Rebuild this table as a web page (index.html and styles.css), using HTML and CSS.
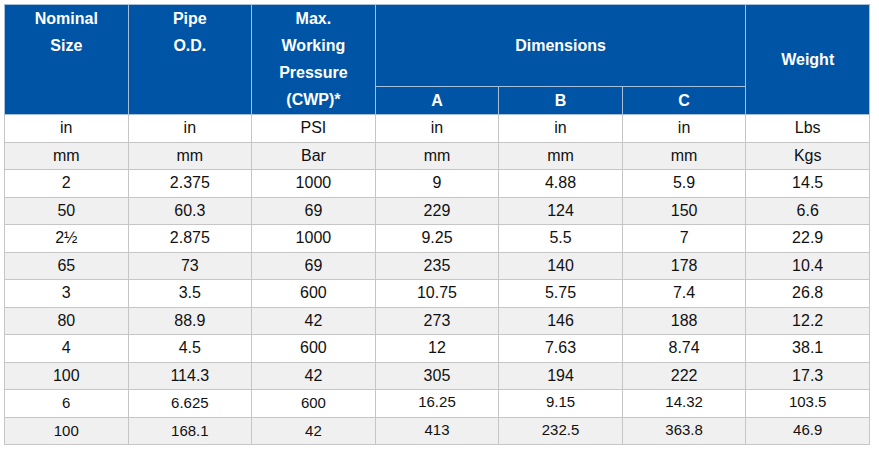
FILE: index.html
```html
<!DOCTYPE html>
<html>
<head>
<meta charset="utf-8">
<link rel="stylesheet" href="styles.css">
</head>
<body>
<table class="spec">
  <colgroup>
    <col><col><col><col><col><col><col>
  </colgroup>
  <thead>
    <tr class="h1">
      <th rowspan="2" class="top">Nominal<br>Size</th>
      <th rowspan="2" class="top">Pipe<br>O.D.</th>
      <th rowspan="2" class="top">Max.<br>Working<br>Pressure<br>(CWP)*</th>
      <th colspan="3">Dimensions</th>
      <th rowspan="2">Weight</th>
    </tr>
    <tr class="h2">
      <th>A</th><th>B</th><th>C</th>
    </tr>
  </thead>
  <tbody>
    <tr><td>in</td><td>in</td><td>PSI</td><td>in</td><td>in</td><td>in</td><td>Lbs</td></tr>
    <tr><td>mm</td><td>mm</td><td>Bar</td><td>mm</td><td>mm</td><td>mm</td><td>Kgs</td></tr>
    <tr><td>2</td><td>2.375</td><td>1000</td><td>9</td><td>4.88</td><td>5.9</td><td>14.5</td></tr>
    <tr><td>50</td><td>60.3</td><td>69</td><td>229</td><td>124</td><td>150</td><td>6.6</td></tr>
    <tr><td>2½</td><td>2.875</td><td>1000</td><td>9.25</td><td>5.5</td><td>7</td><td>22.9</td></tr>
    <tr><td>65</td><td>73</td><td>69</td><td>235</td><td>140</td><td>178</td><td>10.4</td></tr>
    <tr><td>3</td><td>3.5</td><td>600</td><td>10.75</td><td>5.75</td><td>7.4</td><td>26.8</td></tr>
    <tr><td>80</td><td>88.9</td><td>42</td><td>273</td><td>146</td><td>188</td><td>12.2</td></tr>
    <tr><td>4</td><td>4.5</td><td>600</td><td>12</td><td>7.63</td><td>8.74</td><td>38.1</td></tr>
    <tr><td>100</td><td>114.3</td><td>42</td><td>305</td><td>194</td><td>222</td><td>17.3</td></tr>
    <tr class="alt"><td>6</td><td>6.625</td><td>600</td><td class="sm">16.25</td><td class="sm">9.15</td><td class="sm">14.32</td><td class="sm">103.5</td></tr>
    <tr class="alt"><td>100</td><td>168.1</td><td>42</td><td class="sm">413</td><td class="sm">232.5</td><td class="sm">363.8</td><td class="sm">46.9</td></tr>
  </tbody>
</table>
</body>
</html>
```

FILE: styles.css
```css
html, body {
  margin: 0;
  padding: 0;
  background: #ffffff;
}
body {
  padding: 4px;
  font-family: "Liberation Sans", Arial, sans-serif;
}
.spec {
  border-collapse: collapse;
  table-layout: fixed;
  width: 866px;
  font-size: 16px;
  color: #111111;
}
.spec th {
  background: #0054a6;
  color: #ffffff;
  font-weight: bold;
  border: 1px solid #a8bfd9;
  text-align: center;
  padding: 0;
  line-height: 27px;
}
.spec th.top {
  vertical-align: top;
}
.spec .h1 th {
  height: 81px;
}
.spec .h2 th {
  height: 26px;
}
.spec td {
  border: 1px solid #c6c6c6;
  text-align: center;
  padding: 0;
  height: 26.5px;
  line-height: 26.5px;
}
.spec tbody tr:nth-child(even) td {
  background: #f0f0f0;
}
.spec tr.alt td {
  font-size: 15px;
}
.spec td.sm {
  font-size: 14px;
  line-height: 24px;
  vertical-align: top;
}
```
